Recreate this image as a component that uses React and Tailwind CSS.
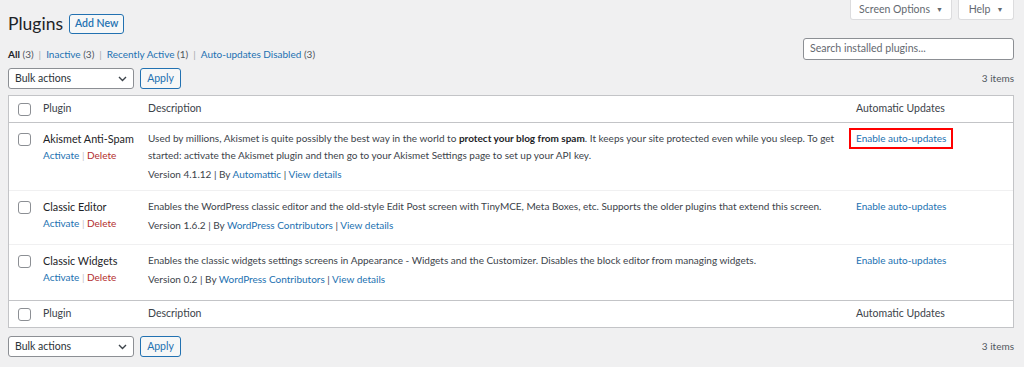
import React from "react";

const font = { fontFamily: 'Lato, "Open Sans", sans-serif' };

function Check() {
  return <span className="block w-[13px] h-[13px] rounded-[3px] border border-[#8c8f94] bg-white"></span>;
}

function Chevron() {
  return (
    <svg width="9" height="6" viewBox="0 0 9 6" className="text-[#3c434a]">
      <path d="M1 1l3.5 3.5L8 1" fill="none" stroke="currentColor" strokeWidth="1.4" />
    </svg>
  );
}

function BulkRow() {
  return (
    <div className="flex items-center h-[21px]">
      <div className="w-[126px] h-[21px] border border-[#8c8f94] rounded-[3px] bg-white flex items-center justify-between pl-[6px] pr-[6px] text-[10.5px] text-[#2c3338]">
        <span>Bulk actions</span>
        <Chevron />
      </div>
      <div className="ml-[6px] w-[41px] h-[21px] border border-[#2271b1] rounded-[3px] bg-[#f6f7f7] flex items-center justify-center text-[10.5px] text-[#2271b1]">
        Apply
      </div>
      <div className="ml-auto text-[10px] text-[#50575e]">3 items</div>
    </div>
  );
}

function HeaderRow({ border }) {
  return (
    <div className={`grid grid-cols-[26px_105px_708px_1fr] h-[27px] items-center text-[10.5px] text-[#3c434a] ${border}`}>
      <div className="pl-[9px] flex items-center"><Check /></div>
      <div className="pl-2">Plugin</div>
      <div className="pl-2">Description</div>
      <div className="pl-2">Automatic Updates</div>
    </div>
  );
}

function PluginRow({ name, desc, version, author, highlight, h, last }) {
  return (
    <div className={`grid grid-cols-[26px_105px_708px_1fr] ${h} ${last ? "" : "border-b border-[#f0f0f1]"} text-[10px] text-[#3c434a]`}>
      <div className="pl-[9px] pt-[10px]"><Check /></div>
      <div className="pl-2 pt-[7px]">
        <div className="leading-[17px] text-[10.8px] text-[#1d2327]">{name}</div>
        <div className="leading-[17px] text-[10px]">
          <span className="text-[#2271b1]">Activate</span>
          <span className="text-[#c3c4c7]"> | </span>
          <span className="text-[#b32d2e]">Delete</span>
        </div>
      </div>
      <div className="pl-2 pr-2 pt-[7px]">
        <div className="leading-[17px]">{desc}</div>
        <div className="leading-[17px] mt-[2px]">
          Version {version} | By <span className="text-[#2271b1]">{author}</span> | <span className="text-[#2271b1]">View details</span>
        </div>
      </div>
      <div className="pt-[5px] pl-[1px]">
        <span className={`inline-block leading-[17px] px-[5px] text-[10px] text-[#2271b1] border-2 ${highlight ? "border-[#ff0000]" : "border-transparent"}`}>
          Enable auto-updates
        </span>
      </div>
    </div>
  );
}

export default function App() {
  return (
    <div style={font} className="w-[1024px] h-[367px] bg-[#f0f0f1] relative overflow-hidden">
      <div className="absolute top-0 right-[10px] flex gap-[6px]">
        <div className="w-[102px] h-[20px] bg-white border border-t-0 border-[#dcdcde] rounded-b-[3px] flex items-center justify-center gap-[6px] text-[10.5px] text-[#646970]">
          Screen Options <span className="text-[7px]">▼</span>
        </div>
        <div className="w-[56px] h-[20px] bg-white border border-t-0 border-[#dcdcde] rounded-b-[3px] flex items-center justify-center gap-[6px] text-[10.5px] text-[#646970]">
          Help <span className="text-[7px]">▼</span>
        </div>
      </div>

      <div className="pl-[8px] pr-[10px]">
        <div className="flex items-center pt-[14px] h-[34px]">
          <h1 className="text-[17.5px] text-[#1d2327] leading-none">Plugins</h1>
          <div className="ml-[6px] h-[20px] px-[5px] border border-[#2271b1] rounded-[3px] bg-[#f6f7f7] flex items-center text-[10.5px] font-semibold text-[#2271b1]">
            Add New
          </div>
        </div>

        <div className="flex mt-[4px] h-[22px]">
          <div className="text-[10px] leading-[15px] text-[#50575e] mt-[9px]">
            <span className="font-bold text-[#1d2327]">All</span> (3)
            <span className="text-[#a7aaad] mx-[5px]">|</span>
            <span className="text-[#2271b1]">Inactive</span> (3)
            <span className="text-[#a7aaad] mx-[5px]">|</span>
            <span className="text-[#2271b1]">Recently Active</span> (1)
            <span className="text-[#a7aaad] mx-[5px]">|</span>
            <span className="text-[#2271b1]">Auto-updates Disabled</span> (3)
          </div>
          <div className="ml-auto w-[211px] h-[22px] border border-[#8c8f94] rounded-[3px] bg-white flex items-center pl-[6px] text-[10.6px] text-[#646970]">
            Search installed plugins...
          </div>
        </div>

        <div className="mt-[8px]"><BulkRow /></div>

        <div className="mt-[6px] bg-white border border-[#c3c4c7]">
          <HeaderRow border="border-b border-[#c3c4c7]" />
          <PluginRow
            h="h-[68px]"
            name="Akismet Anti-Spam"
            desc={
              <>
                Used by millions, Akismet is quite possibly the best way in the world to <b className="font-bold text-[#1d2327]">protect your blog from spam</b>. It keeps your site protected even while you sleep. To get started: activate the Akismet plugin and then go to your Akismet Settings page to set up your API key.
              </>
            }
            version="4.1.12"
            author="Automattic"
            highlight
          />
          <PluginRow
            h="h-[54px]"
            name="Classic Editor"
            desc="Enables the WordPress classic editor and the old-style Edit Post screen with TinyMCE, Meta Boxes, etc. Supports the older plugins that extend this screen."
            version="1.6.2"
            author="WordPress Contributors"
          />
          <PluginRow
            h="h-[55px]"
            name="Classic Widgets"
            desc="Enables the classic widgets settings screens in Appearance - Widgets and the Customizer. Disables the block editor from managing widgets."
            version="0.2"
            author="WordPress Contributors"
            last
          />
          <HeaderRow border="border-t border-[#c3c4c7]" />
        </div>

        <div className="mt-[8px]"><BulkRow /></div>
      </div>
    </div>
  );
}
